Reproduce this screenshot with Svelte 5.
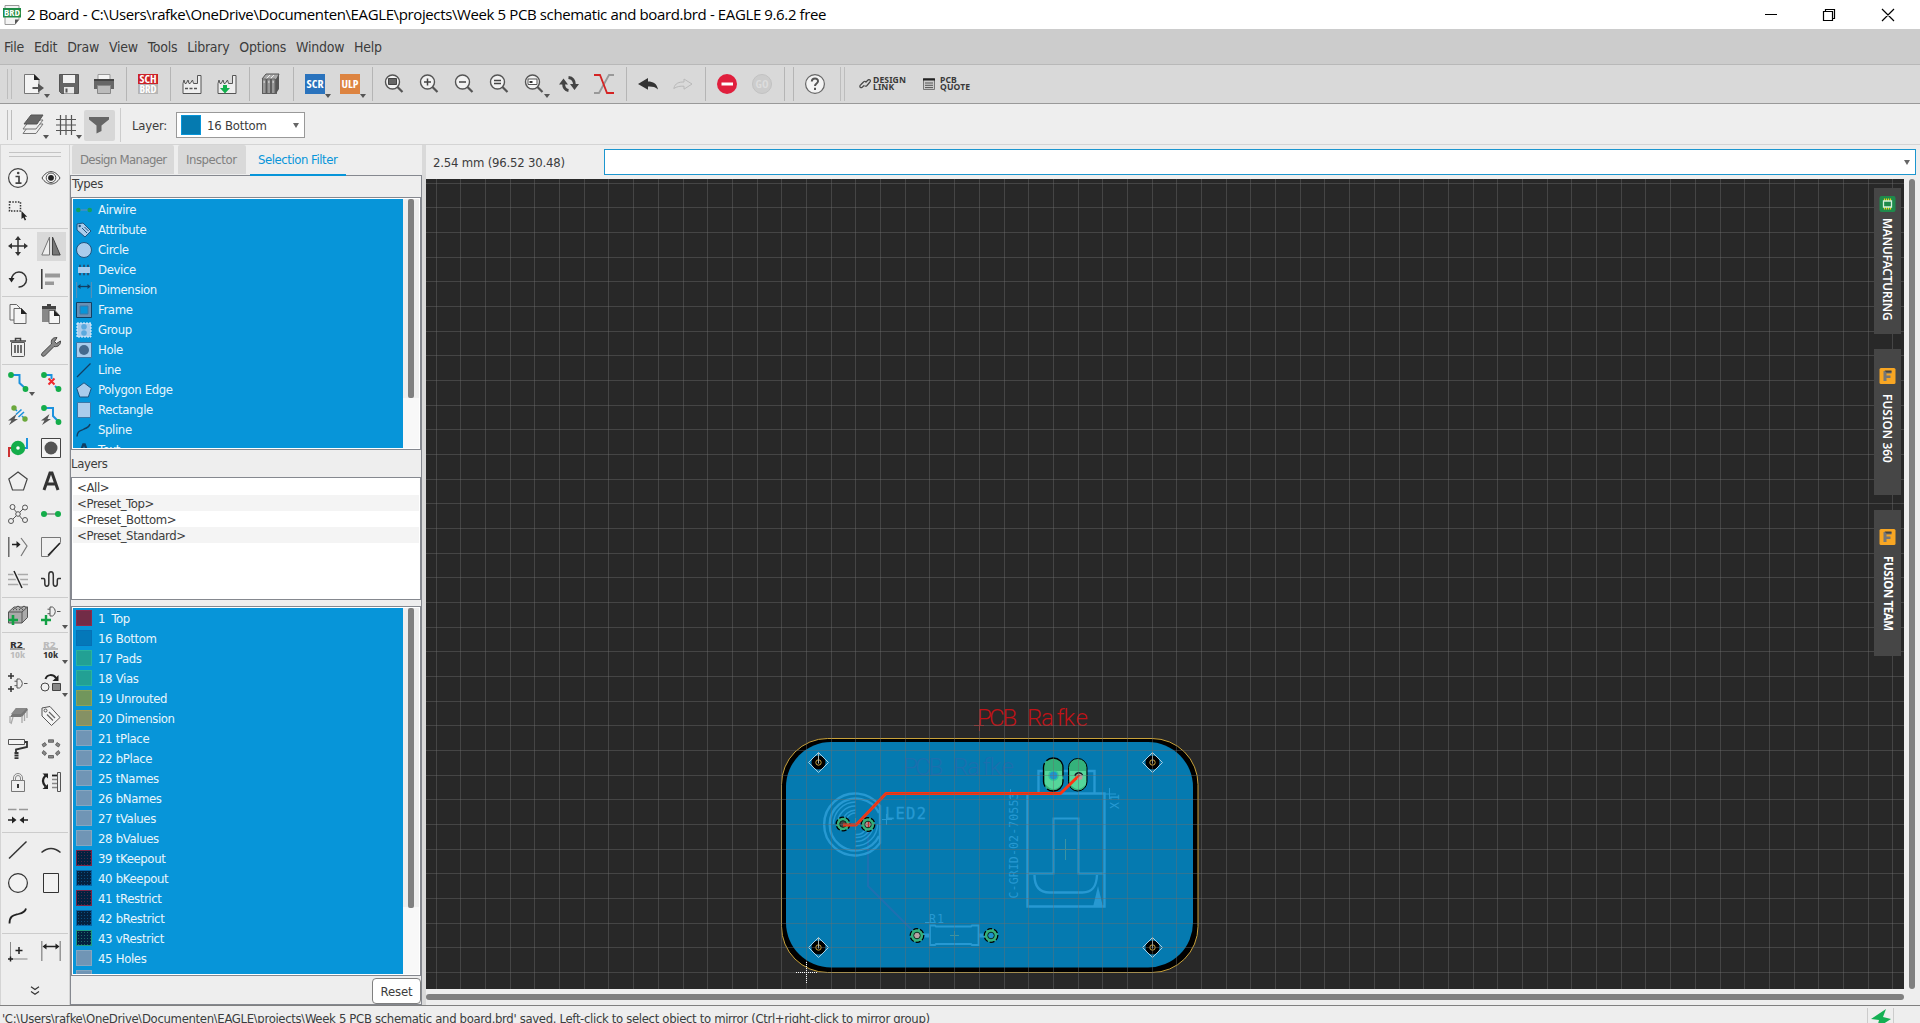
<script>
  const menus = ['File', 'Edit', 'Draw', 'View', 'Tools', 'Library', 'Options', 'Window', 'Help'];

  const mag = '<circle cx="8.5" cy="8" r="7" fill="#f2f2f2" stroke="#555" stroke-width="1.4"/><path d="M13.500 13l5 5" stroke="#555" stroke-width="2.200"/>';
  const factory = '<path d="M1 19.500V9.500L2 6l1 3.500h1.200L6 6l1 3.500h1.200L10.500 6l1 3.500h4V1.500h3.500v18z" fill="#eee" stroke="#555"/>';
  const gate = '<path d="M9 2h2.500a5 5 0 0 1 0 9H9zM6.500 4.200H9M6.500 8.700H9M16 6.500h3.500" fill="none" stroke="#555"/>';

  const icons = {
    open: '<path d="M.500.500h9.500l5 5v14H.500z" fill="#f4f4f4" stroke="#777"/><path d="M10 0v6h6z" fill="#222"/><path d="M8.500 14h8" stroke="#555" stroke-width="2"/><path d="M14 9.500l6 4.500-6 4.500z" fill="#555"/>',
    save: '<path d="M.500.500h19v19h-17l-2-2z" fill="#666" stroke="#555"/><path d="M4 1h12v8H4z" fill="#f2f2f2"/><path d="M5 13h10v6.500H5z" fill="#e8e8e8"/><path d="M6.500 14.500h2v4h-2z" fill="#555"/>',
    print: '<path d="M4 .500h12v6H4z" fill="#f4f4f4" stroke="#999"/><path d="M0 6h20v9H0z" fill="#666"/><path d="M0 6h20" stroke="#444" stroke-width="2"/><path d="M3.500 11.500h13v8h-13z" fill="#bbb" stroke="#888"/>',
    sch: '<path d="M0 0h20v10H0z" fill="#cc2228"/><path d="M0 10h20v10H0z" fill="#b5b5b5"/><text x="10" y="8.700" font-size="10" textLength="17" lengthAdjust="spacingAndGlyphs">SCH</text><text x="10" y="18.700" font-size="10" textLength="17" lengthAdjust="spacingAndGlyphs">BRD</text>',
    fab: factory + '<path d="M3 14.500h12" stroke="#555" stroke-width="1.500" stroke-dasharray="3 1.500"/>',
    fabdown: factory + '<path d="M6 11h4v3h3l-5 5.500L3 14h3z" fill="#12b04c"/>',
    library: '<path d="M1 5l4-5h13l-2 5v15H1z" fill="#666"/><path d="M1 5l4-5h13l-2 5" fill="#aaa" stroke="#555"/><path d="M1.500 5h3.500v14.500H1.500zM6 5h3.500v14.500H6zM10.500 5H14v14.500h-3.500z" fill="#999" stroke="#555" stroke-width=".8"/><path d="M15 5l3-4v14l-3 4.500z" fill="#555"/><path d="M2.500 8H4M7 8h1.500M11.500 8H13M6 4l3-3M10 4l3-3" stroke="#eee"/>',
    scr: '<path d="M0 0h20v20H0z" fill="#2a73bd"/><text x="10" y="14" font-size="10.500" textLength="17" lengthAdjust="spacingAndGlyphs">SCR</text>',
    ulp: '<path d="M0 0h20v20H0z" fill="#dd8441"/><text x="10" y="14" font-size="10.500" textLength="17" lengthAdjust="spacingAndGlyphs">ULP</text>',
    zfit: mag + '<path d="M4.500 4.500h8v6h-8z" fill="#666" stroke="#444"/>',
    zin: mag + '<path d="M5 8h7M8.500 4.500v7" stroke="#444" stroke-width="1.500"/>',
    zout: mag + '<path d="M5 8h7" stroke="#444" stroke-width="1.500"/>',
    zredraw: mag + '<path d="M5 6.500h7M5 9.500h7" stroke="#444" stroke-width="1.300"/>',
    zsel: mag + '<path d="M4 5h9v5.500H4z" fill="#fff" stroke="#555"/><path d="M5.500 7h3v2h-3z" fill="#333"/>',
    refresh: '<path d="M4.500 9c0 4 1.500 7 5 7.500M15.500 11c0-4-1.500-7-6-7.500" fill="none" stroke="#444" stroke-width="2.800"/><path d="M0 10.500L4.500 4.500 9 10.500zM11 10h9l-4.500 6z" fill="#444"/>',
    cross: '<path d="M20 1h-5L5 19H0" fill="none" stroke="#999" stroke-width="1.800"/><path d="M0 1h6l7 18h7" fill="none" stroke="#d42323" stroke-width="1.800"/>',
    undo: '<path d="M0 10l10-6v3.500c5 0 9 2 10 8-3-2.800-6-3.200-10-3v3.200z" fill="#333"/>',
    redo: '<path d="M19 10l-8-5v3C6 8 2 9 .800 14.500 4 12.500 7 12 11 12.200v3z" fill="none" stroke="#b9b9b9"/>',
    stop: '<circle cx="10" cy="10" r="10" fill="#e01f3d"/><path d="M4.500 8.500h11.500v3H4.500z" fill="#fff"/>',
    go: '<circle cx="10" cy="10" r="9.500" fill="#ccc" stroke="#c2c2c2"/><text x="10" y="14" font-size="11" textLength="13" lengthAdjust="spacingAndGlyphs" fill="#ddd">GO</text>',
    help: '<circle cx="10" cy="10" r="9.400" fill="#f4f4f4" stroke="#666" stroke-width="1.200"/><path d="M6.800 7.500c.200-4 6.500-3.800 6.200 0-.200 2-3 2-3 4.500M10 13.800v2.200" fill="none" stroke="#555" stroke-width="2"/>',
    layers: '<path d="M7 9h13l-7 9.500H0z" fill="#eee" stroke="#777"/><path d="M7 5h13l-7 9H0z" fill="#eee" stroke="#777"/><path d="M8 0h12l-6 9H1z" fill="#666" stroke="#555"/>',
    grid: '<path d="M0 4.500h20M0 10h20M0 15.500h20M4.500 0v20M10 0v20M15.500 0v20" stroke="#555" stroke-width="1.200"/>',
    filter: '<path d="M0 1h20v2.500L12.500 9.500V15l-5 2.500v-8L0 3.500z" fill="#666"/>',

    info: '<circle cx="10" cy="10" r="9.400" fill="#f4f4f4" stroke="#444" stroke-width="1.200"/><path d="M7.500 8.500H11V15M7.500 15.200h6" fill="none" stroke="#444" stroke-width="1.700"/><circle cx="10.200" cy="5" r="1.300" fill="#444"/>',
    eye: '<path d="M1 10c5-8.500 13-8.500 18 0-5 8-13 8-18 0z" fill="#f4f4f4" stroke="#444"/><circle cx="10" cy="9.800" r="4.800" fill="none" stroke="#555"/><circle cx="10" cy="9.800" r="2.900" fill="#222"/>',
    select: '<path d="M1.500 1h11v9h-11z" fill="none" stroke="#333" stroke-width="1.500" stroke-dasharray="1.500 1.300"/><path d="M13.500 10v8l1.800-1.600 1.500 3 1.300-.600-1.400-3h2.500z" fill="#222"/>',
    move: '<path d="M10 2v16M2 10h16" stroke="#333" stroke-width="1.500"/><path d="M10 0l3 4H7zM10 20l3-4H7zM0 10l4-3v6zM20 10l-4-3v6z" fill="#333"/>',
    mirror: '<path d="M8.500 1v18H.800z" fill="#eee" stroke="#777"/><path d="M11.500 1v18h7.700z" fill="#777" stroke="#444"/>',
    rotate: '<path d="M3.500 11a7.500 7.500 0 1 1 7 7" fill="none" stroke="#333" stroke-width="1.500"/><path d="M.500 9h6l-3 4.500z" fill="#222"/>',
    align: '<path d="M.800 0v20" stroke="#333" stroke-width="1.500"/><path d="M4 4.500h15v4H4zM4 12.500h9v3.500H4z" fill="#999"/>',
    copy: '<path d="M2 .500h6.500L12 4v12H2z" fill="#f4f4f4" stroke="#666"/><path d="M6 4.500h7.500l4.500 5v10H6z" fill="#f4f4f4" stroke="#666"/><path d="M13 4v6h6z" fill="#222"/>',
    paste: '<path d="M1 2h14v16H1z" fill="#888"/><path d="M1 2h14v3H1zM6 0h4v2H6z" fill="#444"/><path d="M8 6.500h6l4.500 5v8H8z" fill="#f4f4f4" stroke="#666"/><path d="M13 6v6h6z" fill="#222"/>',
    trash: '<path d="M3.500 5.500h13v13q0 1-1 1h-11q-1 0-1-1z" fill="#eee" stroke="#555"/><path d="M2 4h16M7.500 3.500v-2h5v2" fill="none" stroke="#444" stroke-width="1.500"/><path d="M7 8v8M10 8v8M13 8v8" stroke="#444" stroke-width="1.500"/>',
    wrench: '<path d="M19.500 4l-4 2.500-2-2L16 .600C12 0 9.500 3 10.500 7L.800 16.500c-1 2 1 3.500 2.700 2.500L13 9.500c4 .800 7-2 6.500-5.500z" fill="#888" stroke="#444"/>',
    route: '<path d="M4 3h7.500v8L18 17" fill="none" stroke="#1c92dd" stroke-width="2"/><circle cx="3" cy="3" r="2.900" fill="#14ad4a"/><circle cx="17.500" cy="17" r="2.900" fill="#14ad4a"/>',
    ripup: '<path d="M4 3h6.500v4M14 14l3 3" fill="none" stroke="#1c92dd" stroke-width="2"/><path d="M7.500 6.500l6 6M13.500 6.500l-6 6" stroke="#f0282e" stroke-width="2"/><circle cx="3" cy="3" r="2.900" fill="#14ad4a"/><circle cx="17.500" cy="17" r="2.900" fill="#14ad4a"/>',
    quick: '<path d="M6 3l3 3M14 11l3 3M8 9.500l5.500-5M10.500 12l5.500-5" stroke="#1c92dd" stroke-width="1.600"/><circle cx="6" cy="3" r="2.700" fill="#6ba83c"/><circle cx="17" cy="14" r="2.700" fill="#6ba83c"/><path d="M8.500 9l-8.500 6.500h3.500L1 20l9-6H6.500z" fill="#555"/>',
    multi: '<path d="M4 3h8v8L18 17" fill="none" stroke="#1c92dd" stroke-width="2"/><circle cx="3" cy="3" r="2.900" fill="#14ad4a"/><circle cx="17.500" cy="17" r="2.900" fill="#14ad4a"/><path d="M8.500 9l-8.500 6.500h3.500L1 20l9-6H6.500z" fill="#555"/>',
    via: '<path d="M1 19V10h5" fill="none" stroke="#c33" stroke-width="2"/><path d="M19 0v10h-5" fill="none" stroke="#1c92dd" stroke-width="2"/><circle cx="10" cy="10" r="4.500" fill="#fff" stroke="#14ad4a" stroke-width="5.400"/>',
    hole: '<path d="M.500.500h19v19H.500z" fill="#f4f4f4" stroke="#444"/><circle cx="10" cy="10" r="6.500" fill="#555"/>',
    polygon: '<path d="M10 1l9.200 7-3.700 11h-11L.800 8z" fill="#f0f0f0" stroke="#444" stroke-width="1.200"/>',
    text: '<path d="M3 19L9 2h2l6 17M5.500 13h9" fill="none" stroke="#333" stroke-width="3"/>',
    ratsnest: '<path d="M5 4l10 12M16 4L4 16" stroke="#555"/><g fill="#f0f0f0" stroke="#555"><circle cx="4.500" cy="3" r="2.500"/><circle cx="17" cy="3.500" r="2.500"/><circle cx="10" cy="10" r="2.300"/><circle cx="3" cy="17" r="2.500"/><circle cx="17" cy="16" r="2.500"/></g>',
    airwire: '<path d="M4 10h12" stroke="#888" stroke-width="1.500"/><circle cx="3" cy="10" r="3" fill="#14ad4a"/><circle cx="17" cy="10" r="3" fill="#14ad4a"/>',
    split: '<path d="M.800 0v20" stroke="#555" stroke-width="1.300"/><path d="M4 7.500h7" stroke="#222" stroke-width="1.500"/><path d="M8.500 4l4 3.500-4 3.500z" fill="#222"/><path d="M13 1l6 8-6 10" fill="none" stroke="#777" stroke-width="1.200"/>',
    miter: '<path d="M.500.500h19v5l-12 14h-7z" fill="#f0f0f0" stroke="#777"/><path d="M19 6L7 18.500" stroke="#222" stroke-width="1.600"/>',
    slice: '<path d="M0 4.500h20M0 9.500h20M0 14.500h20" stroke="#aaa" stroke-width="1.300"/><path d="M6 1l8 17" stroke="#eee" stroke-width="4"/><path d="M6 1l8 17" stroke="#222" stroke-width="1.500"/>',
    meander: '<path d="M0 8.500h2.500Q3.800 8.500 3.800 11v2.500c0 3.500 4 3.500 4 0V5c0-4.500 4.500-4.500 4.500 0v8.500c0 3.500 4 3.500 4 0V11q0-2.500 1.200-2.500H20" fill="none" stroke="#333" stroke-width="1.500"/>',
    addpart: '<path d="M.500 7L6 2h13.500v10.500L14 18H.500z" fill="#aaa" stroke="#555"/><path d="M.500 7H14v11M14 7l5.500-5" fill="none" stroke="#555"/><path d="M5 5q2-3 4 0M11 5q2-3 4 0M8 2.500q2-3 4 0M14 2.500q2-3 4 0" fill="#eee" stroke="#444"/><path d="M5 10v10M0 15h10" stroke="#12a044" stroke-width="2.600"/>',
    addgate: gate + '<path d="M5 10v10M0 15h10" stroke="#12a044" stroke-width="2.400"/>',
    name: '<text x="8.500" y="7.500" font-size="9.500" fill="#333" textLength="13" lengthAdjust="spacingAndGlyphs">R2</text><path d="M2 9h15" stroke="#555"/><text x="9.500" y="17.800" font-size="9.500" fill="#bbb" textLength="15" lengthAdjust="spacingAndGlyphs">10k</text>',
    value: '<text x="8.500" y="7.500" font-size="9.500" fill="#bbb" textLength="13" lengthAdjust="spacingAndGlyphs">R2</text><path d="M2 9h15" stroke="#888"/><text x="9.500" y="17.800" font-size="9.500" fill="#333" textLength="15" lengthAdjust="spacingAndGlyphs">10k</text>',
    smash: '<g transform="translate(0 4)">' + gate + '</g><path d="M3 0v6M0 3h6M3 13v6M0 16h6" stroke="#333" stroke-width="1.500"/>',
    change: '<circle cx="4" cy="14" r="4" fill="#f0f0f0" stroke="#444"/><path d="M11.500 10.500h8v7h-8z" fill="#888" stroke="#444"/><path d="M4.500 6C6 1 12 1 15 5" fill="none" stroke="#222" stroke-width="2"/><path d="M17.500 2v6h-6z" fill="#222"/>',
    lock: '<path d="M3.500 8.500h13v11h-13z" fill="#eee" stroke="#777"/><path d="M5.500 8.500V6a4.500 4.500 0 0 1 9 0v2.500M7.500 8.500V6a2.500 2.500 0 0 1 5 0v2.500" fill="none" stroke="#888"/><path d="M10 12v4" stroke="#333" stroke-width="2"/>',
    pack: '<path d="M8 2h11l1 2-6 7H2z" fill="#777"/><path d="M8 2h11l-6 6H3z" fill="#888"/><path d="M2 10v7M5 11l-2 7M14 10v7M16.500 8v7M19 5v7" stroke="#aaa" stroke-width="1.300"/>',
    tag: '<path d="M1 2l8-1.500L19 11.500l-8.500 8L1 10z" fill="#f4f4f4" stroke="#555"/><circle cx="4.500" cy="4.500" r="1.500" fill="none" stroke="#555"/><path d="M8 6l6 6M6 8.500l6 6" stroke="#666" stroke-width="1.300"/>',
    paint: '<path d="M.500.500h16v5h-16z" fill="#f4f4f4" stroke="#555"/><path d="M17 3h2v5L8 10.500V13" fill="none" stroke="#333" stroke-width="1.800"/><path d="M8.500 13v7" stroke="#333" stroke-width="4" stroke-dasharray="2 .600"/>',
    array: '<g fill="#888" stroke="#555" stroke-width=".8"><path d="M7.500.800h5v2.500h-5zM7.500 16.500h5V19h-5zM1 5.500l3-2 1.500 2.500-3 2zM19 5.500l-3-2-1.500 2.500 3 2zM1 14l3 2.500L5.500 14l-3-2.500zM19 14l-3 2.500-1.500-2.500 3-2.500z"/></g>',
    swap: '<path d="M4.500 3.500Q-.500 9 4.500 14.500" fill="none" stroke="#222" stroke-width="2.200"/><path d="M1.500 1.500H7v5zM7 12v5H1.500z" fill="#222"/><path d="M16.500.500h3v19h-3z" fill="#eee" stroke="#555"/><path d="M11 3.500h5" stroke="#222" stroke-width="1.800"/><path d="M11 7.500h5M11 11.500h5M11 15.500h5" stroke="#888" stroke-width="1.500"/>',
    optimize: '<path d="M0 4.500h8.500M11 4.500h9" stroke="#999" stroke-width="1.500"/><path d="M0 15h5M15 15h5" stroke="#222" stroke-width="1.500"/><path d="M4 11.500l4.500 3.500L4 18.500zM16 11.500L11.500 15l4.500 3.500z" fill="#222"/>',
    line: '<path d="M1 18.500L18.500 1.500" stroke="#333" stroke-width="1.500"/>',
    arc: '<path d="M.500 12.500q9.500-8 19 0" fill="none" stroke="#333" stroke-width="1.500"/>',
    circle: '<circle cx="10" cy="10" r="9.400" fill="#f2f2f2" stroke="#333" stroke-width="1.200"/>',
    rect: '<path d="M2.500.500h15v19h-15z" fill="#f2f2f2" stroke="#333"/>',
    spline: '<path d="M1.500 17.500c0-8 4-8 9-9.500 4-1 7-3 7.500-5.500" fill="none" stroke="#222" stroke-width="1.800"/>',
    mark: '<path d="M2.500 1v17M2.500 18h17" stroke="#888"/><path d="M11 6v7M7.500 9.500h7M2.500 15.500v5M0 18h5" stroke="#222" stroke-width="1.500"/>',
    dim: '<path d="M.800 0v20M19.200 0v20" stroke="#888" stroke-width="1.300"/><path d="M3 5.500h14" stroke="#222" stroke-width="1.500"/><path d="M1.500 5.500l4-3v6zM18.500 5.500l-4-3v6z" fill="#222"/>',
  };

  const toolbar = [
    [['open', 1], ['save'], ['print']],
    [['sch']],
    [['fab'], ['fabdown']],
    [['library']],
    [['scr', 1], ['ulp', 1]],
    [['zfit'], ['zin'], ['zout'], ['zredraw'], ['zsel', 1], ['refresh'], ['cross']],
    [['undo'], ['redo']],
    [['stop'], ['go']],
    [],
    [['help']],
  ];

  // Editing palette: groups of two-column rows
  const palette = [
    [['info'], ['eye'], ['select'], ['']],
    [['move'], ['mirror', 0, 1], ['rotate'], ['align']],
    [['copy'], ['paste'], ['trash'], ['wrench']],
    [['route', 1], ['ripup'], ['quick'], ['multi'], ['via'], ['hole'], ['polygon'], ['text'], ['ratsnest'], ['airwire'], ['split'], ['miter'], ['slice'], ['meander']],
    [['addpart'], ['addgate', 1]],
    [['name'], ['value', 1], ['smash'], ['change', 1], ['pack'], ['tag'], ['paint'], ['array'], ['lock'], ['swap'], ['optimize'], ['']],
    [['line'], ['arc'], ['circle'], ['rect'], ['spline'], ['']],
    [['mark'], ['dim']],
  ];

  const P = 'fill="#a9ccec" stroke="#1f5580"';
  const types = [
    ['Airwire', '<path d="M4 8h8" stroke="#4a8fc0" stroke-width="1.500"/><circle cx="2.300" cy="8" r="2.300" fill="#12a060"/><circle cx="13.700" cy="8" r="2.300" fill="#12a060"/>'],
    ['Attribute', `<path d="M1 2l6-1 8 8-6 6-8-7z" ${P}/><circle cx="3.700" cy="4" r="1.200" fill="#1f5580"/><path d="M6 6l5 5M8.500 5l4 4" stroke="#1f5580"/>`],
    ['Circle', `<circle cx="8" cy="8" r="7.500" ${P}/>`],
    ['Device', '<path d="M4 5.500V2.800M8 5.500V2.800M12 5.500V2.800M4 13.200v-2.700M8 13.200v-2.700M12 13.200v-2.700" stroke="#24547a" stroke-width="2"/><path d="M2 5h12v6H2z" fill="#a9ccec"/>'],
    ['Dimension', '<path d="M.600 0v16M15.400 0v16" stroke="#5d8fb5"/><path d="M2 4.500h12" stroke="#123f63" stroke-width="1.300"/><path d="M1.500 4.500l3-2.500v5zM14.500 4.500l-3-2.500v5z" fill="#123f63"/>'],
    ['Frame', '<path d="M.500.500h15v15H.500z" fill="#6a90b4" stroke="#123f63"/><path d="M4 4h8v8H4z" fill="#0795d9" stroke="#3b78a8"/>'],
    ['Group', `<path d="M1 1h14v14H1z" fill="#a9ccec" stroke="#e6f4ff" stroke-dasharray="2 1"/><circle cx="8" cy="4.800" r="2.800" fill="#5aa9de"/><circle cx="8" cy="11" r="2.800" fill="#5aa9de"/>`],
    ['Hole', '<path d="M.500.500h15v15H.500z" fill="#a9ccec" stroke="#3b78a8"/><circle cx="8" cy="8" r="5" fill="#446a8e"/>'],
    ['Line', '<path d="M1 15L14.500 1.500" stroke="#123f63" stroke-width="1.300"/>'],
    ['Polygon Edge', `<path d="M8 .800l7.300 5.500-3 8.700H3.700l-3-8.700z" ${P}/>`],
    ['Rectangle', `<path d="M1.500.500h13v15h-13z" fill="#a9ccec" stroke="#3b78a8"/>`],
    ['Spline', '<path d="M1 14.500c.500-6 3-5 7-7.500 3-1 5.500-3 6-5" fill="none" stroke="#123f63" stroke-width="1.400"/>'],
    ['Text', '<path d="M3 14L7.300 2.500h1.400L13 14" fill="none" stroke="#123f63" stroke-width="2.300"/>'],
  ];

  const presets = ['<All>', '<Preset_Top>', '<Preset_Bottom>', '<Preset_Standard>'];

  const layers = [
    ['1', 'Top', 'red'], ['16', 'Bottom', 'blue'], ['17', 'Pads', 'teal'], ['18', 'Vias', 'teal'],
    ['19', 'Unrouted', 'olive'], ['20', 'Dimension', 'khaki'], ['21', 'tPlace', 'slate'], ['22', 'bPlace', 'slate'],
    ['25', 'tNames', 'slate'], ['26', 'bNames', 'slate'], ['27', 'tValues', 'slate'], ['28', 'bValues', 'slate'],
    ['39', 'tKeepout', 'dark dred'], ['40', 'bKeepout', 'dark dblue'], ['41', 'tRestrict', 'dark dred'],
    ['42', 'bRestrict', 'dark dblue'], ['43', 'vRestrict', 'dark dgreen'], ['45', 'Holes', 'slate'], ['', '', 'slate'],
  ];

  // Grid lines snapped to whole pixels, counted from the board origin
  const xs = Array.from({ length: 60 }, (_, i) => Math.floor(806.5 + (i - 15) * 24.69)).filter((x) => x >= 426 && x < 1904);
  const ys = Array.from({ length: 33 }, (_, i) => Math.floor(972.63 - i * 24.675));

  // Pen advance of every letter in the silkscreen label
  const label = [0, 12, 25.5, 38, 50, 64, 79.5, 86.5, 98.5];
  const at = (x) => label.map((d) => x + d).join(' ');

  const holes = [[818.5, 762.5], [1152.5, 762.5], [818.5, 947.5], [1152.5, 947.5]];
  const sideTabs = [['MANUFACTURING', 'chip'], ['FUSION 360', 'fusion'], ['FUSION TEAM', 'fusion team']];
</script>

{#snippet tool([name, more, active])}
  <div class="tool" class:active>
    {#if name}<svg class="ico" viewBox="0 0 20 20">{@html icons[name]}</svg>{/if}
    {#if more}<i class="more"></i>{/if}
  </div>
{/snippet}

{#snippet pad(x, y, hole)}
  <circle cx={x} cy={y} r="6.800" fill="#34b27b" stroke="#000" stroke-width="1.300" stroke-dasharray="5 2" />
  <circle cx={x} cy={y} r="3.300" fill={hole} stroke="#0b2a20" />
{/snippet}

<div class="window">
  <header class="title">
    <svg class="appicon" viewBox="0 0 20 20">
      <path d="M2 .500h14v14l-4 5H2z" fill="#f4f4f4" stroke="#999" />
      <path d="M12 19.500v-5h4z" fill="#555" />
      <path d="M0 3h18v9.500H0z" fill="#1f8b46" />
      <text x="9" y="10.800" font-size="8.500" textLength="16" lengthAdjust="spacingAndGlyphs">BRD</text>
    </svg>
    <span class="caption">2 Board - C:\Users\rafke\OneDrive\Documenten\EAGLE\projects\Week 5 PCB schematic and board.brd - EAGLE 9.6.2 free</span>
    <svg class="controls" viewBox="0 0 130 14">
      <path d="M0 6.500h12M58.500 3.500h9v9h-9zM60.500 3.500v-2h9v9h-2M117 1l12 12M129 1l-12 12" fill="none" stroke="#000" stroke-width="1.200" />
    </svg>
  </header>

  <nav class="menu">{#each menus as m}<span>{m}</span>{/each}</nav>

  <div class="toolbar">
    <i class="grip"></i>
    {#each toolbar as group, i}
      {#if i}<i class="sep"></i>{/if}
      {#each group as t}{@render tool(t)}{/each}
    {/each}
    <i class="grip second"></i>
    <div class="link">
      <svg viewBox="0 0 12 12"><path d="M5 7.500L3.500 9q-2 1.500-2.500 0t1-2.500L4.500 4q1.500-1.500 2.500 0M6.500 4.500L8.500 2.500q1.500-1.500 2.500-.500t-.500 2.500L8 7.500q-1.500 1.500-2.500 0" fill="none" stroke="#444" stroke-width="1.200" /></svg>
      <b>DESIGN<br />LINK</b>
    </div>
    <div class="link quote">
      <svg viewBox="0 0 12 12"><path d="M.500.500h11v11H.500z" fill="#ccc" stroke="#777" /><path d="M0 1.500h12" stroke="#222" stroke-width="2" /><path d="M2 5h8M2 7.300h8M2 9.600h8" stroke="#555" /></svg>
      <b>PCB<br />QUOTE</b>
    </div>
  </div>

  <div class="layerbar">
    <i class="grip"></i>
    {@render tool(['layers', 1])}
    {@render tool(['grid', 1])}
    {@render tool(['filter', 0, 1])}
    <i class="sep"></i>
    <span class="lbl">Layer:</span>
    <div class="combo"><i class="swatch"></i><span>16 Bottom</span><i class="arrow"></i></div>
  </div>

  <main>
    <aside class="palette">
      <i class="hgrip"></i>
      {#each palette as group, i}
        {#if i}<hr />{/if}
        <div class="group">{#each group as t}{@render tool(t)}{/each}</div>
      {/each}
      <svg class="expand" viewBox="0 0 10 10"><path d="M1 .800l4 2.700 4-2.700M1 5.500l4 2.700 4-2.700" fill="none" stroke="#333" stroke-width="1.200" /></svg>
    </aside>

    <section class="panel">
      <div class="tabs"><span class="dm">Design Manager</span><span class="insp">Inspector</span><span class="on">Selection Filter</span></div>
      <div class="body">
        <div class="heading">Types</div>
        <div class="list types">
          <div class="rows">
            {#each types as [label, art]}
              <div class="row"><svg viewBox="0 0 16 16">{@html art}</svg><span>{label}</span></div>
            {/each}
          </div>
          <div class="scroll"><i></i></div>
        </div>
        <div class="heading lay">Layers</div>
        <div class="presets">{#each presets as p}<div>{p}</div>{/each}</div>
        <div class="list layers">
          <div class="rows">
            {#each layers as [num, name, tone]}
              <div class="row"><i class={'sw ' + tone}></i><span>{num} {name}</span></div>
            {/each}
          </div>
          <div class="scroll"><i></i></div>
        </div>
        <div class="foot"><button>Reset</button></div>
      </div>
    </section>

    <section class="work">
      <div class="cmd">
        <span class="coords">2.54 mm (96.52 30.48)</span>
        <div class="entry"><i class="arrow"></i></div>
      </div>
      <div class="view">
        <div class="canvas">
          <svg class="board" viewBox="426 179 1478 810">
            <rect x="781.500" y="738.500" width="416.500" height="234" rx="46" fill="#000" stroke="#c9a23a" />
            <rect x="786" y="742" width="407" height="225.500" rx="45" fill="#057ab0" />
            <text class="vec" x={at(903)} y="775" fill="#1c6fae">PCB Rafke</text>
            <text class="vec" x={at(977)} y="726" fill="#c01217">PCB Rafke</text>
            <path d="M974 725.500h10M979.500 720v11" stroke="#a02020" fill="none" />
            <path d="M868 831v55l44 44" fill="none" stroke="#1f70b0" stroke-width="2" />

            <g fill="none" stroke="#2799d2" stroke-width="2.400">
              <path d="M880 806a31 31 0 1 0 0 37zM879 813a26 26 0 1 0 0 23" />
              <g stroke-width="1.500">
                <path d="M833.500 824a22 22 0 0 1 22-22M837.500 824a18 18 0 0 1 18-18M842.500 821a14 14 0 0 1 13-11M847 818a10 10 0 0 1 8.500-5M877.500 824a22 22 0 0 1-22 22M873.500 826a18 18 0 0 1-18 15.500M870 829a14 14 0 0 1-14.500 8.500M865 830a10 10 0 0 1-9.500 4.500" />
              </g>
              <path d="M1027.500 793.500h77v113h-77z" />
              <path d="M1038.500 793v-22h56v22" />
              <path d="M1028 873.500h25.500V818.500h25v55h26" stroke-width="2" />
              <path d="M1034.500 875c0 12 5 17.500 15 17.500h33c10 0 14-6 14.500-17.500" />
              <path d="M930 925.500h5l1 1h35l1-1h6.500v19.500h-6.500l-1-1h-35l-1 1h-5z" stroke-width="1.800" />
              <path d="M922 935.500h8M979 935.500h8" stroke-width="4" />
              <path d="M882 819.500h10M886.500 814v11M925 922.500h10M1104 794h12M1109.500 788v11M1006 793.500h12M1010.500 789v10" stroke-width="1" />
            </g>
            <path d="M1093 907l5-21 5 21z" fill="#2799d2" />
            <path d="M1055 849.500h21M1065.500 839v21M950 935.500h9M954.500 931v9M851 824.500h9M855.500 818v12" stroke="#3a94a4" />
            <text class="vec led" x="885" y="818.500" textLength="41">LED2</text>
            <text class="vec small" x="929" y="923" textLength="15">R1</text>
            <text class="vec small" transform="translate(1018 898.500) rotate(-90)" textLength="106">C-GRID-02-70553</text>
            <text class="vec small" transform="translate(1118.500 809) rotate(-90)" textLength="15">X1</text>

            <rect x="1043.500" y="758" width="19.500" height="33" rx="9.500" fill="#34b27b" stroke="#000" stroke-width="1.300" stroke-dasharray="24 3" />
            <rect x="1068.500" y="758.500" width="18.500" height="32.500" rx="9.200" fill="#34b27b" stroke="#000" />
            <path d="M1045 771h17v13q-8 10-17 0zM1070 771h16v13q-8 10-16 0z" fill="#55d69a" />
            <circle cx="1053.500" cy="775.500" r="4.500" fill="#1e93cc" stroke="#2cc39b" stroke-width="1.500" />

            {@render pad(843, 824, '#444')}
            {@render pad(868, 824.5, '#b99')}
            {@render pad(917, 935.5, '#b9a3a3')}
            {@render pad(991, 935.5, '#1e93cc')}
            <path d="M868.500 822v5" stroke="#c22" stroke-width="1.500" />

            <path d="M843 825h13l30-31.500h174.500l18.500-18" fill="none" stroke="#ff3311" stroke-width="3" stroke-linejoin="round" />
            <path d="M843 825h13l30-31.500h174.500" fill="none" stroke="#b6452a" stroke-width=".8" />
            <path d="M1075 776a4 4 0 0 1 7.500-1" fill="none" stroke="#112" stroke-width="1.500" />
            <circle cx="1079.500" cy="777" r="3" fill="#b99" />
            <path d="M1075.500 779l4-4" stroke="#ff3311" stroke-width="2" />

            {#each holes as [x, y]}
              <g transform="translate({x} {y})" fill="none">
                <circle r="7" fill="#000" stroke="none" />
                <path d="M0-10L10 0 0 10-10 0z" stroke="#a8cfe2" />
                <circle r="2.700" stroke="#c9a23a" />
                <path d="M0-10V1" stroke="#aab4b0" />
              </g>
            {/each}

            <g class="grid">
              {#each xs as x}<path d="M{x + 0.5} 179v810" />{/each}
              {#each ys as y}<path d="M426 {y + 0.5}h1478" />{/each}
            </g>
            <path d="M796 972.500h21M806.500 962v21" stroke="#fff" stroke-dasharray="1 1" />
          </svg>
          <div class="sidetabs">
            {#each sideTabs as [label, kind]}
              <div class={'side ' + kind}>
                {#if kind === 'chip'}
                  <svg viewBox="0 0 16 16"><rect width="16" height="16" rx="2" fill="#1f8a4c" /><path d="M5 2.500v11M7 2.500v11M9 2.500v11M11 2.500v11" stroke="#e8d81c" stroke-width="1.200" /><path d="M4 5h8v6H4z" fill="#1f8a4c" stroke="#d5f0dd" stroke-width="1.300" /></svg>
                {:else}
                  <svg viewBox="0 0 16 16"><rect width="16" height="16" rx="1.500" fill="#f8a623" /><path d="M4 13V3h8v2.500H7v2h4V10H7v3z" fill="#777" /><path d="M5 2.500h7v2H7z" fill="#444" /></svg>
                {/if}
                <span>{label}</span>
              </div>
            {/each}
          </div>
        </div>
        <div class="vscroll"><i></i></div>
        <div class="hscroll"><i></i></div>
        <div class="corner"></div>
      </div>
    </section>
  </main>

  <footer>
    <span>'C:\Users\rafke\OneDrive\Documenten\EAGLE\projects\Week 5 PCB schematic and board.brd' saved. Left-click to select object to mirror (Ctrl+right-click to mirror group)</span>
    <div class="bolt"><svg viewBox="0 0 20 20"><path d="M15 1L0 11l8 1-2 8 14-9-8-2z" fill="#14b053" /></svg></div>
  </footer>
</div>

<style>
  :global(body) { margin: 0; overflow: hidden; }
  .window {
    width: 1920px; height: 1023px; overflow: hidden; display: flex; flex-direction: column;
    background: #eee; color: #3c3c3c; font: 13px/16px "DejaVu Sans Condensed", "DejaVu Sans", sans-serif;
    font-stretch: condensed; letter-spacing: -0.2px; box-sizing: border-box;
  }
  .window :global(*) { box-sizing: border-box; }
  svg { display: block; flex: none; }
  svg :global(text) { font-family: "Open Sans", sans-serif; font-weight: 700; text-anchor: middle; letter-spacing: 0; }
  svg :global(text:not([fill])) { fill: #fff; }

  .title { height: 29px; flex: none; background: #fff; display: flex; align-items: center; padding-left: 3px; }
  .appicon { width: 20px; height: 20px; }
  .caption { margin: -2px 0 0 4px; color: #000; font: 15px/20px "Open Sans", sans-serif; letter-spacing: -0.38px; white-space: nowrap; }
  .controls { width: 130px; height: 14px; margin: 0 25px 0 auto; }

  .menu { height: 36px; flex: none; background: #ccc; border-bottom: 1px solid #b8b8b8; display: flex; align-items: center; padding-left: 4px; gap: 9.900px; font-size: 14px; letter-spacing: -0.25px; }

  .toolbar { height: 39px; flex: none; background: #d9d9d9; border-bottom: 1px solid #999; display: flex; align-items: center; }
  .tool { position: relative; width: 35px; height: 34px; flex: none; padding: 7px; }
  .ico { width: 20px; height: 20px; overflow: visible; }
  .more { position: absolute; right: 2px; bottom: 3px; border: 3px solid transparent; border-top: 4.5px solid #555; border-bottom: 0; }
  .grip { width: 5px; height: 30px; flex: none; border: solid #bdbdbd; border-width: 0 1px; margin: 0 5px 0 7px; }
  .sep { width: 1px; height: 34px; flex: none; background: #b5b5b5; margin: 0 4px; }
  .grip.second { height: 34px; margin: 0 0 0 7px; }
  .link { display: flex; align-items: center; gap: 2px; margin-left: 14px; width: 64px; }
  .link svg { width: 12px; height: 12px; }
  .link b { font: 700 8.6px/7.5px "Noto Sans", sans-serif; letter-spacing: 0.1px; color: #3a3a3a; }
  .link.quote { margin-left: 0; gap: 5px; }

  .layerbar { height: 41px; flex: none; border-bottom: 1px solid #d4d4d4; display: flex; align-items: center; padding-top: 2px; }
  .layerbar .tool { width: 33px; height: 31px; padding: 5px 6px; }
  .layerbar .more { bottom: 2px; right: 1px; }
  .layerbar .active { width: 31px; margin-left: 1px; border-radius: 2px; background: #d7d7d7; padding: 6px 5px; }
  .layerbar .sep { margin: 0 11px 0 5px; background: #ccc; }
  .lbl { width: 44px; padding-top: 1px; }
  .combo { width: 129px; height: 26px; border: 1px solid #999; background: #fff; display: flex; align-items: center; padding: 0 5px 0 4px; gap: 6px; }
  .combo span { padding-top: 1px; }
  .swatch { width: 20px; height: 20px; background: #057ab0; border: 1px solid #0795d9; }
  .arrow { margin-left: auto; border: 3.5px solid transparent; border-top: 5px solid #666; border-bottom: 0; }

  main { height: 860px; flex: none; display: flex; }
  .palette { width: 70px; border-left: 1px solid #d4d4d4; border-right: 1px solid #d4d4d4; flex: none; }
  .hgrip { display: block; height: 5px; margin: 7px 8px 5px; border: solid #c4c4c4; border-width: 1px 0; }
  .group { display: grid; grid-template-columns: 33px 33px; padding-left: 1px; }
  .palette .tool { width: 33px; height: 33px; padding: 6px; }
  .palette .active { background: linear-gradient(#d9d9d9, #d9d9d9) 2px 2px / 29px 29px no-repeat; }
  .palette .more { right: 0; bottom: 3px; }
  hr { border: 0; height: 1px; margin: 0 1px 1px; background: #ccc; }
  .expand { width: 10px; height: 10px; margin: 18px 0 0 29px; }

  .panel { width: 352px; flex: none; display: flex; flex-direction: column; letter-spacing: -0.37px; }
  .tabs { height: 30px; display: flex; padding-left: 2px; gap: 4px; position: relative; z-index: 1; }
  .tabs span { height: 29px; padding: 7px 8px; background: #d9d9d9; color: #808080; border-radius: 2px 2px 0 0; white-space: nowrap; letter-spacing: -0.45px; }
  .tabs .dm { width: 102px; letter-spacing: -0.64px; }
  .tabs .insp { width: 68px; }
  .tabs .on { width: 96px; height: 31px; background: none; color: #0795d9; border-bottom: 2px solid #0795d9; }
  .body { flex: 1; border: 1px solid #85888f; display: flex; flex-direction: column; }
  .heading { height: 21px; padding: 0 1px; }
  .heading.lay { height: 27px; padding: 6px 0 0; }
  .list { display: flex; border: 1px solid #85888f; background: #fff; padding: 1px; }
  .types { height: 253px; }
  .layers { height: 370px; margin-top: 6px; }
  .rows { width: 330px; overflow: hidden; background: #0795d9; }
  .row { height: 20px; display: flex; align-items: center; padding: 1px 3px 0; gap: 6px; color: #e9f5fc; white-space: nowrap; }
  .row svg, .sw { width: 16px; height: 16px; flex: none; }
  .layers .row { padding-top: 0; word-spacing: 0.3px; }
  .layers .row span { padding-top: 2px; }
  .layers .row:first-child { word-spacing: 3px; }
  .scroll { flex: 1; padding-left: 5px; }
  .scroll i { display: block; width: 6px; height: 199px; border-radius: 2px; background: #808080; }
  .types .scroll { background: linear-gradient(#eee 199px, #f8f8f8 0); }
  .layers .scroll { background: linear-gradient(#eee 299px, #f8f8f8 0); }
  .layers .scroll i { height: 300px; }
  .presets { height: 123px; border: 1px solid #85888f; background: #fff; padding: 1px; }
  .presets div { height: 16px; padding-left: 4px; line-height: 17px; }
  .presets div:nth-child(even) { background: #f4f4f4; }
  .foot { flex: 1; display: flex; justify-content: flex-end; align-items: flex-end; }
  button { width: 49px; height: 26px; padding: 1px 0 0; border: 1px solid #808080; border-radius: 4px; background: #fff; color: inherit; font: inherit; letter-spacing: -0.1px; }

  .sw { border: 1px solid; }
  .red { background: #722c47; border-color: #8e2a4c; }
  .blue { background: #0478b9; border-color: #0870b4; }
  .teal { background: #22a094; border-color: #2bb39c; }
  .olive { background: #71965c; border-color: #8aa35a; }
  .khaki { background: #859164; border-color: #a29c58; }
  .slate { background: #7095b5; border-color: #86a6c0; }
  .dark { background: radial-gradient(circle, var(--dot) 0.5px, transparent 0.8px) 0 0 / 3px 3px #04213f; }
  .dred { --dot: #4b2848; border-color: #7a2648; }
  .dblue { --dot: #0a5080; border-color: #0a64a4; }
  .dgreen { --dot: #1d6a68; border-color: #1f9a84; }

  .work { flex: 1; border-left: 4px solid #d9d9d9; display: flex; flex-direction: column; }
  .cmd { height: 34px; display: flex; align-items: center; padding: 0 4px 0 7px; }
  .coords { width: 171px; padding-top: 1px; }
  .entry { flex: 1; height: 26px; border: 1px solid #1c96cf; background: #fff; display: flex; align-items: center; padding-right: 5px; }
  .view { flex: 1; display: grid; grid-template: 810px 16px / 1478px 16px; }
  .canvas { position: relative; background: #282828; }
  .board { width: 1478px; height: 810px; }
  .grid { fill: none; stroke: #6e6e6e; stroke-opacity: 0.42; shape-rendering: crispEdges; }
  .vec { font: 300 24px "Roboto", sans-serif; text-anchor: start; }
  .vec.led { font: 400 15.500px "DejaVu Sans Mono", monospace; fill: #2799d2; stroke: #2799d2; stroke-width: 0.3px; }
  .vec.small { font: 400 11.600px "DejaVu Sans Mono", monospace; fill: #2799d2; }
  .sidetabs { position: absolute; right: 3px; top: 9px; display: flex; flex-direction: column; gap: 15.500px; }
  .side { width: 27px; height: 145.500px; background: #464646; color: #fff; display: flex; flex-direction: column; align-items: center; padding-top: 19px; gap: 10px; }
  .side.chip { padding-top: 8px; gap: 6px; }
  .side svg { width: 17px; height: 16px; }
  .side span { writing-mode: vertical-rl; font: 600 11.800px/14px "Noto Sans", sans-serif; letter-spacing: -0.1px; white-space: nowrap; }
  .side.fusion span { letter-spacing: 0.1px; }
  .side.team { gap: 11px; }
  .side.team span { font-weight: 700; font-size: 11.500px; letter-spacing: -0.4px; }
  .vscroll { padding: 0 5px; background: #eee; }
  .vscroll i { display: block; width: 6px; height: 810px; border-radius: 3px; background: #808080; }
  .hscroll { padding: 5px 0; background: #eee; }
  .hscroll i { display: block; height: 6px; border-radius: 3px; background: #808080; }

  footer { height: 18px; flex: none; border-top: 1px solid #808080; display: flex; justify-content: space-between; padding: 3px 26px 0 2px; white-space: nowrap; line-height: 20px; letter-spacing: -0.34px; }
  .bolt { width: 27px; height: 20px; border: solid #ccc; border-width: 0 1px; padding: 0 3px; margin-top: -1px; }
  .bolt svg { width: 20px; height: 20px; }
</style>
